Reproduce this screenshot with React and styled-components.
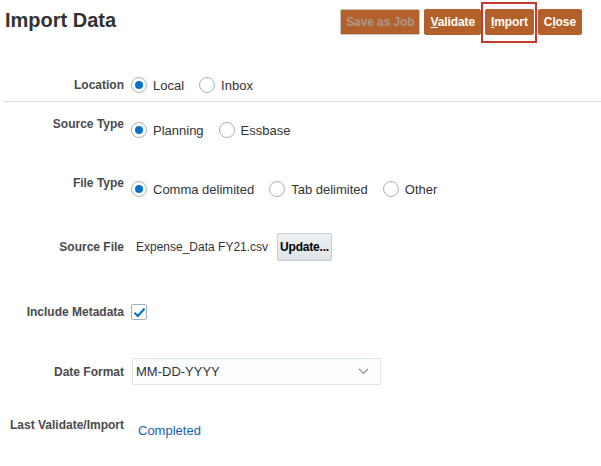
import React from 'react';
import styled, { createGlobalStyle } from 'styled-components';

const GlobalStyle = createGlobalStyle`
  html, body {
    margin: 0;
    padding: 0;
    background: #fff;
  }
  body {
    font-family: "Liberation Sans", Arial, sans-serif;
    color: #333;
  }
`;

const Page = styled.div`
  width: 601px;
  height: 466px;
  overflow: hidden;
`;

const Header = styled.div`
  display: flex;
  align-items: center;
  justify-content: space-between;
  padding: 9px 19px 0 5px;
  height: 26px;
`;

const Title = styled.h1`
  margin: 0;
  font-size: 20px;
  font-weight: bold;
  color: #333;
  line-height: 22px;
  position: relative;
  top: -2px;
`;

const Toolbar = styled.div`
  display: flex;
  gap: 4px;
`;

const ActionButton = styled.button`
  height: 26px;
  padding: 0 5px;
  border: 1px solid ${(p) => (p.disabled ? '#c8c2bc' : '#b4602a')};
  border-radius: 2px;
  background: #b4602a;
  color: ${(p) => (p.disabled ? '#a8998c' : '#fff')};
  font-family: "Liberation Sans", Arial, sans-serif;
  font-size: 12px;
  font-weight: bold;
  letter-spacing: -0.1px;
  cursor: ${(p) => (p.disabled ? 'default' : 'pointer')};

  u {
    text-decoration: underline;
  }
`;

const Focused = styled.span`
  position: relative;
  display: inline-flex;

  &::after {
    content: '';
    position: absolute;
    top: -7px;
    left: -4px;
    right: -3px;
    bottom: -8px;
    border: 2px solid #c9382c;
    pointer-events: none;
  }
`;

const Form = styled.div`
  display: flex;
  flex-direction: column;
`;

const Row = styled.div`
  display: flex;
  align-items: ${(p) => (p.$top ? 'flex-start' : 'center')};
  gap: 7px;
  margin-top: ${(p) => p.$gap}px;
`;

const Label = styled.div`
  width: 124px;
  flex: none;
  text-align: right;
  font-size: 12px;
  font-weight: bold;
  line-height: 16px;
  color: #4a4a4a;
`;

const Value = styled.div`
  display: flex;
  align-items: center;
  margin-top: ${(p) => p.$drop || 0}px;
  min-height: 20px;
`;

const Divider = styled.hr`
  margin: 8px 0 0 4px;
  border: none;
  border-top: 1px solid #d6dfe6;
  height: 0;
`;

const RadioGroup = styled.div`
  display: flex;
  align-items: center;
  gap: 15px;
`;

const RadioOption = styled.label`
  display: flex;
  align-items: center;
  gap: 6px;
  font-size: 13px;
  color: #333;
`;

const RadioCircle = styled.span`
  width: 16px;
  height: 16px;
  box-sizing: border-box;
  border: 1px solid #aab2b8;
  border-radius: 50%;
  background: #fff;
  display: flex;
  align-items: center;
  justify-content: center;

  &::after {
    content: '';
    width: 8px;
    height: 8px;
    border-radius: 50%;
    background: ${(p) => (p.$checked ? '#0572ce' : 'transparent')};
  }
`;

const FileName = styled.span`
  font-size: 12px;
  color: #333;
  margin-left: 5px;
  margin-right: 9px;
`;

const UpdateButton = styled.button`
  height: 28px;
  padding: 0 2px;
  border: 1px solid #c4ced7;
  border-radius: 2px;
  background: linear-gradient(#eef1f3, #dfe4e8);
  color: #000;
  font-family: "Liberation Sans", Arial, sans-serif;
  font-size: 12px;
  font-weight: bold;
  letter-spacing: -0.2px;
`;

const CheckBox = styled.span`
  width: 16px;
  height: 16px;
  box-sizing: border-box;
  border: 1px solid #a7b0b8;
  border-radius: 2px;
  background: #fff;
  display: flex;
  align-items: center;
  justify-content: center;
`;

const Select = styled.div`
  width: 249px;
  height: 27px;
  box-sizing: border-box;
  margin-left: 1px;
  border: 1px solid #dfe4e7;
  border-radius: 1px;
  background: #fcfdfe;
  display: flex;
  align-items: center;
  justify-content: space-between;
  padding: 0 11px 0 3px;
  font-size: 13px;
  color: #333;
`;

const Status = styled.span`
  font-size: 13px;
  color: #1b62ad;
  line-height: 16px;
  margin-left: 7px;
`;

const Radio = ({ checked, children }) => (
  <RadioOption>
    <RadioCircle $checked={checked} />
    {children}
  </RadioOption>
);

export default function App() {
  return (
    <Page>
      <GlobalStyle />
      <Header>
        <Title>Import Data</Title>
        <Toolbar>
          <ActionButton disabled>Save as Job</ActionButton>
          <ActionButton>
            <u>V</u>alidate
          </ActionButton>
          <Focused>
            <ActionButton>
              <u>I</u>mport
            </ActionButton>
          </Focused>
          <ActionButton>
            C<u>l</u>ose
          </ActionButton>
        </Toolbar>
      </Header>

      <Form>
        <Row $gap={42}>
          <Label>Location</Label>
          <RadioGroup>
            <Radio checked>Local</Radio>
            <Radio>Inbox</Radio>
          </RadioGroup>
        </Row>
        <Divider />

        <Row $gap={14} $top>
          <Label>Source Type</Label>
          <Value $drop={4}>
            <RadioGroup>
              <Radio checked>Planning</Radio>
              <Radio>Essbase</Radio>
            </RadioGroup>
          </Value>
        </Row>

        <Row $gap={35} $top>
          <Label>File Type</Label>
          <Value $drop={4}>
            <RadioGroup>
              <Radio checked>Comma delimited</Radio>
              <Radio>Tab delimited</Radio>
              <Radio>Other</Radio>
            </RadioGroup>
          </Value>
        </Row>

        <Row $gap={34}>
          <Label>Source File</Label>
          <Value>
            <FileName>Expense_Data FY21.csv</FileName>
            <UpdateButton>Update...</UpdateButton>
          </Value>
        </Row>

        <Row $gap={43}>
          <Label>Include Metadata</Label>
          <CheckBox>
            <svg width="13" height="11" viewBox="0 0 13 11">
              <path
                d="M1.5 5.8 L4.8 9 L11.5 1.8"
                fill="none"
                stroke="#0572ce"
                strokeWidth="2.2"
              />
            </svg>
          </CheckBox>
        </Row>

        <Row $gap={38}>
          <Label>Date Format</Label>
          <Select>
            <span>MM-DD-YYYY</span>
            <svg width="11" height="7" viewBox="0 0 11 7">
              <path d="M1 1 L5.5 5.5 L10 1" fill="none" stroke="#8a9299" strokeWidth="1.2" />
            </svg>
          </Select>
        </Row>

        <Row $gap={32} $top>
          <Label>Last Validate/Import</Label>
          <Value $drop={4}>
            <Status>Completed</Status>
          </Value>
        </Row>
      </Form>
    </Page>
  );
}
